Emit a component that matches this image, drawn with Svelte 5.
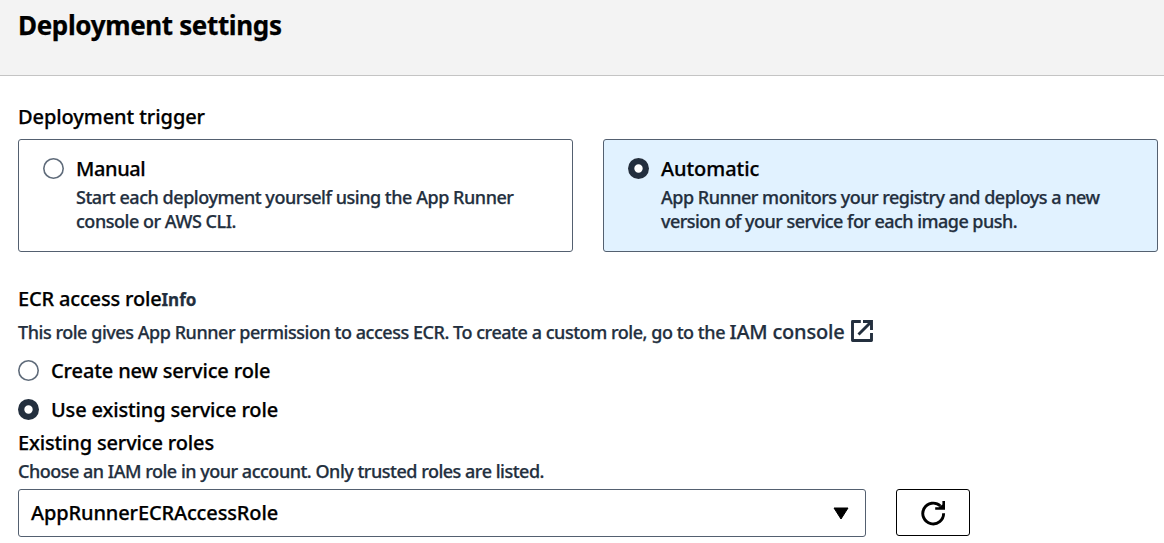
<script>
  let trigger = $state('auto');
  let roleMode = $state('existing');
  const triggers = [
    { id: 'manual', title: 'Manual', ls: -0.4, lines: [['Start each deployment yourself using the App Runner', -0.465], ['console or AWS CLI.', -0.47]] },
    { id: 'auto', title: 'Automatic', ls: -0.06, lines: [['App Runner monitors your registry and deploys a new', -0.503], ['version of your service for each image push.', -0.545]] },
  ];
  const modes = [
    { id: 'new', label: 'Create new service role', ls: -0.12 },
    { id: 'existing', label: 'Use existing service role', ls: -0.147 },
  ];
</script>

<main>
  <header><h1>Deployment settings</h1></header>
  <div class="body">
    <div class="label trig">Deployment trigger</div>
    <div class="cards">
      {#each triggers as t}
        <div class="card" class:selected={trigger === t.id} role="radio" aria-checked={trigger === t.id} tabindex="-1" onclick={() => (trigger = t.id)} onkeydown={() => (trigger = t.id)}>
          <span class="dot" class:on={trigger === t.id}></span>
          <div>
            <div class="label" style:letter-spacing="{t.ls}px">{t.title}</div>
            <div class="desc">
              {#each t.lines as [text, ls]}
                <div style:letter-spacing="{ls}px">{text}</div>
              {/each}
            </div>
          </div>
        </div>
      {/each}
    </div>

    <div class="label ecr"><span class="ecr-name">ECR access role</span><b>Info</b></div>
    <div class="note">
      <span class="note-text">This role gives App Runner permission to access ECR. To create a custom role, go to the</span>
      <span class="link">IAM console</span>
      <svg width="22" height="22" viewBox="0 0 22 22" fill="none" stroke="#232f3e" stroke-width="2.9">
        <path d="M9.8 1.5H1.5V20.5H20.5V13" stroke-linejoin="round" />
        <path d="M12 1.5H20.5V10M20 2L7.5 14.5" />
      </svg>
    </div>

    <div class="options">
      {#each modes as m}
        <div class="option" role="radio" aria-checked={roleMode === m.id} tabindex="-1" onclick={() => (roleMode = m.id)} onkeydown={() => (roleMode = m.id)}>
          <span class="dot" class:on={roleMode === m.id}></span>
          <div class="label" style:letter-spacing="{m.ls}px">{m.label}</div>
        </div>
      {/each}
    </div>

    <div class="label roles">Existing service roles</div>
    <div class="hint">Choose an IAM role in your account. Only trusted roles are listed.</div>
    <div class="controls">
      <div class="select">
        <span class="label">AppRunnerECRAccessRole</span>
        <svg width="16" height="13" viewBox="0 0 16 13"><path d="M1 1H15L8 12Z" fill="#000" stroke="#000" stroke-linejoin="round" /></svg>
      </div>
      <button aria-label="Refresh">
        <svg width="26" height="26" viewBox="0 0 26 26" fill="none" stroke="#000" stroke-width="2.9">
          <path d="M23.6 13.3A10.4 10.4 0 1 1 20.4 6" />
          <path d="M25 1V9.8H15.2V7.2H19L22.4 4.6V1Z" fill="#000" stroke="none" />
        </svg>
      </button>
    </div>
  </div>
</main>

<style>
  :global(body) { margin: 0; background: #fff; overflow: hidden; }
  main { font-family: 'Noto Sans', sans-serif; font-weight: 500; color: #000; white-space: nowrap; height: 543px; overflow: hidden; -webkit-text-stroke: 0.25px; }
  header { box-sizing: border-box; height: 76px; padding: 9px 18px 0; background: #f3f3f3; border-bottom: 1px solid #c4c4c4; }
  h1 { margin: 0; font-size: 26px; line-height: 32px; font-weight: 700; letter-spacing: -0.36px; }
  .body { padding: 29px 6px 0 18px; }
  .label { font-size: 20px; line-height: 24px; }
  .trig { letter-spacing: -0.076px; }
  .cards { display: grid; grid-template-columns: 1fr 1fr; gap: 30px; margin-top: 10px; }
  .card { display: flex; gap: 12px; box-sizing: border-box; height: 113px; padding: 17px 24px 0; border: 1px solid #546070; border-radius: 3px; }
  .selected { background: #e1f2ff; }
  .dot { flex: none; width: 21px; height: 21px; margin-top: 1px; border-radius: 50%; background: #fff; box-shadow: inset 0 0 0 1.6px #5f6b7a; }
  .dot.on { box-shadow: inset 0 0 0 6.3px #232f3e; }
  .desc { margin-top: 4px; font-size: 18px; line-height: 24px; color: #232f3e; }
  .ecr { height: 24px; margin-top: 35px; }
  .ecr-name { letter-spacing: -0.17px; }
  .ecr b { font-size: 17px; font-weight: 700; color: #232f3e; }
  .note { display: flex; align-items: baseline; height: 24px; margin-top: 9px; line-height: 24px; color: #232f3e; }
  .note-text { font-size: 18px; letter-spacing: -0.461px; width: 711.5px; }
  .link { font-size: 20px; letter-spacing: -0.195px; width: 121.5px; }
  .note svg { align-self: flex-start; }
  .options { display: grid; gap: 15px; margin-top: 15px; }
  .option { display: flex; gap: 12px; height: 24px; }
  .roles { margin-top: 9px; letter-spacing: -0.15px; }
  .hint { margin-top: 4px; font-size: 18px; line-height: 24px; letter-spacing: -0.491px; color: #232f3e; }
  .controls { display: flex; gap: 30px; margin-top: 6px; }
  .select { display: flex; align-items: center; justify-content: space-between; box-sizing: border-box; width: 848px; height: 48px; padding: 0 16px 0 12px; border: 1px solid #546070; border-radius: 3px; letter-spacing: -0.135px; }
  button { display: flex; align-items: center; justify-content: center; box-sizing: border-box; width: 74px; height: 47px; padding: 0; background: #fff; border: 1px solid #000; border-radius: 3px; }
</style>
